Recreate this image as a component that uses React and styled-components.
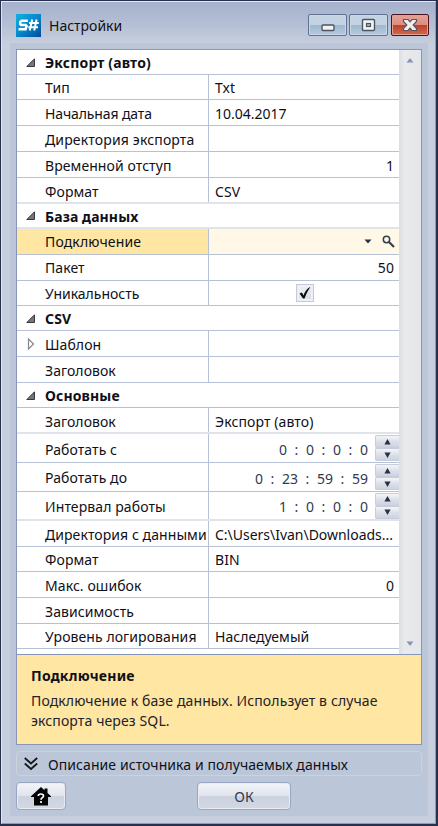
import React from 'react';
import styled, { createGlobalStyle, css } from 'styled-components';

const Global = createGlobalStyle`
  * { box-sizing: border-box; }
  html, body { margin: 0; padding: 0; overflow: hidden; }
  body { font-family: "Noto Sans", "Open Sans", sans-serif; font-size: 14px; color: #101018; }
`;

const Window = styled.div`
  width: 438px;
  height: 826px;
  padding: 1px 2px 2px 1px;
  background: #27304c;
`;
const Frame = styled.div`
  height: 823px;
  display: flex;
  flex-direction: column;
  border: 1px solid #8c9bba;
  border-top-color: #e4e8f4;
  border-left-color: #dfe4f0;
  background: linear-gradient(#a6b1cd 0, #b3bdd3 20px, #c7cfde 42px, #c7cfde 100%);
`;
const TitleBar = styled.header`
  height: 41px;
  flex: none;
  display: flex;
  align-items: flex-start;
  padding: 12px 6px 0 14px;
`;
const Title = styled.h1`
  flex: 1;
  margin: 2px 0 0 8px;
  font-size: 14px;
  font-weight: 400;
  line-height: 20px;
`;
const Controls = styled.div`
  display: flex;
  gap: 2px;
`;
const Control = styled.button`
  display: flex;
  align-items: center;
  justify-content: center;
  width: 39px;
  height: 22px;
  padding: 0;
  border: 1px solid #5f7291;
  border-radius: 2px;
  background: linear-gradient(#c3d3e3 0 50%, #9fb8ce 50%, #b4cbdd);
  box-shadow: inset 0 0 0 1px #c9d8e6;
  ${(p) => p.$close && css`
    width: 38px;
    margin-left: 1px;
    border-color: #4c1220;
    background: linear-gradient(#e5a295 0, #db8d7f 50%, #bd4127 50%, #cf6a4e);
    box-shadow: inset 0 0 0 1px #e3a195;
  `}
`;
const Body = styled.main`
  flex: none;
  width: 418px;
  height: 773px;
  margin: 0 8px;
  padding: 6px 6px 0;
  background: #bbc7d9;
`;
const Panel = styled.section`
  height: 606px;
  display: flex;
  border: 1px solid #8796b4;
  background: #fff;
`;
const Grid = styled.div`
  width: 382px;
  flex: none;
`;
const line = '#b6c1d5';
const rowBorder = css`
  height: ${(p) => p.$h}px;
  display: flex;
  border-bottom: ${(p) => (p.$soft ? '2px solid #dfe3ea' : `1px solid ${line}`)};
`;
const GroupRow = styled.div`
  ${rowBorder}
  align-items: center;
  font-weight: 700;
`;
const Row = styled.div`
  ${rowBorder}
`;
const Gutter = styled.span`
  width: 28px;
  flex: none;
  display: flex;
  align-items: center;
  padding-left: ${(p) => (p.$nested ? 10 : 9)}px;
`;
const Name = styled.div`
  width: 192px;
  flex: none;
  display: flex;
  align-items: center;
  border-right: 1px solid ${line};
  background: ${(p) => (p.$on ? '#ffe6a2' : '#fff')};
`;
const Label = styled.span`
  white-space: pre;
  line-height: 20px;
  padding-top: ${(p) => p.$drop ?? 2}px;
  letter-spacing: ${(p) => p.$ls ?? 0.08}px;
`;
const Value = styled.div`
  flex: 1;
  min-width: 0;
  display: flex;
  align-items: center;
  justify-content: ${(p) => p.$align || 'flex-start'};
  padding: 0 ${(p) => (p.$on ? 4 : 5)}px 0 6px;
  background: ${(p) => (p.$on ? '#fff8e6' : '#fff')};
`;
const Editor = styled.div`
  display: flex;
  align-items: center;
  gap: 10px;
`;
const CheckBox = styled.span`
  width: 18px;
  height: 18px;
  display: flex;
  align-items: center;
  justify-content: center;
  border: 1px solid #c3c9da;
  background: linear-gradient(135deg, #f4f5f9, #d3d8e5);
  box-shadow: inset 0 0 0 2px #eef0f5;
`;
const Time = styled.div`
  display: flex;
  align-items: center;
  color: #303a50;
  margin-right: 7px;
  padding-top: 3px;
`;
const Digits = styled.span`
  line-height: 20px;
`;
const Colon = styled.span`
  width: 19px;
  text-align: center;
  line-height: 20px;
`;
const Spinner = styled.div`
  width: 24px;
  height: 26px;
  display: grid;
  grid-template-rows: 13px 13px;
  margin-right: -5px;
`;
const SpinButton = styled.button`
  display: flex;
  align-items: center;
  justify-content: center;
  padding: 0;
  border: 1px solid #c7cddb;
  border-right: 0;
  border-radius: 2px 0 0 2px;
  background: linear-gradient(#f4f5f8, #dde0e9 50%, #cdd3e0);
`;
const ScrollBar = styled.div`
  flex: 1;
  display: flex;
  flex-direction: column;
  justify-content: space-between;
  align-items: center;
  padding: 8px 0 8px;
  background: linear-gradient(90deg, #dcdee2, #e9eaec 25%, #e5e6e9);
`;
const Description = styled.section`
  height: 90px;
  padding: 11px 14px;
  border: 1px solid #8796b4;
  border-top: 0;
  background: #ffe6a2;
  line-height: 20px;
`;
const DescTitle = styled.div`
  font-weight: 700;
  height: 25px;
  letter-spacing: 0.24px;
`;
const DescLine = styled.div`
  white-space: pre;
  letter-spacing: 0.12px;
  color: #22222a;
`;
const Expander = styled.div`
  height: 25px;
  margin-top: 6px;
  padding-left: 7px;
  display: flex;
  align-items: center;
  gap: 10px;
  border: 1px solid #cdd1d8;
  border-radius: 4px;
`;
const Footer = styled.footer`
  display: grid;
  grid-template-columns: 50px 94px;
  column-gap: 131px;
  margin-top: 6px;
`;
const Button = styled.button`
  height: 28px;
  display: flex;
  align-items: center;
  justify-content: center;
  padding: 0;
  border: 1px solid #9aa7c3;
  border-radius: 4px;
  background: linear-gradient(#f3f5f9, #dfe3eb 50%, #ccd2df 52%, #d3d8e4);
  box-shadow: inset 0 0 0 1px #e8ebf2;
  font: 14px "Noto Sans", sans-serif;
  color: #303a50;
`;

const Logo = () => (
  <svg width="25" height="23" viewBox="0 0 25 23">
    <defs>
      <linearGradient id="lg" x1="0" y1="0" x2="1" y2="1">
        <stop offset="0" stopColor="#12b0e6" />
        <stop offset="0.5" stopColor="#0687cc" />
        <stop offset="1" stopColor="#024a94" />
      </linearGradient>
    </defs>
    <rect width="25" height="23" fill="url(#lg)" />
    <g fill="none" stroke="#fff">
      <path d="M11.8 6.8H5.6L4.2 8V10L5.2 11H9.6L10.6 12L9.6 15.2H2.5" strokeWidth="2.5" />
      <path d="M16.2 5.5L13.8 16.5M20.6 5.5L18.2 16.5M13 9H22.8M12.3 13.2H22" strokeWidth="2" />
    </g>
  </svg>
);
const Minimize = () => (
  <svg width="14" height="14" viewBox="0 0 14 14">
    <rect x="1" y="7" width="12" height="5.5" rx="1" fill="#f2f2f0" stroke="#4c5564" strokeWidth="1.4" />
  </svg>
);
const Maximize = () => (
  <svg width="15" height="14" viewBox="0 0 15 14">
    <rect x="1.5" y="1.5" width="12" height="11" rx="1" fill="#f4f4f2" stroke="#4c5564" strokeWidth="1.4" />
    <rect x="5.5" y="5.5" width="4" height="3" fill="#9db5d0" stroke="#4c5564" strokeWidth="1.2" />
  </svg>
);
const Close = () => (
  <svg width="16" height="14" viewBox="0 0 16 14">
    <path d="M1.5 1.5H6L8 3.8L10 1.5H14.5V3.5L11.2 7L14.5 10.5V12.5H10L8 10.2L6 12.5H1.5V10.5L4.8 7L1.5 3.5Z" fill="#f1efef" stroke="#5b5660" strokeWidth="1.2" />
  </svg>
);
const OpenMark = () => (
  <svg width="9" height="9" viewBox="0 0 9 9">
    <path d="M8.5 .8V8.5H.8Z" fill="#73767b" stroke="#36383d" />
  </svg>
);
const ClosedMark = () => (
  <svg width="8" height="12" viewBox="0 0 8 12">
    <path d="M1.5 1L6.5 6L1.5 11Z" fill="#fff" stroke="#85878b" strokeWidth="1.2" />
  </svg>
);
const Search = () => (
  <svg width="13" height="13" viewBox="0 0 13 13" fill="none" stroke="#333d4e">
    <circle cx="4.5" cy="4.5" r="3.2" strokeWidth="1.5" />
    <path d="M7 7L12 12" strokeWidth="2.1" />
  </svg>
);
const Caret = () => (
  <svg width="8" height="5" viewBox="0 0 8 5"><path d="M.5 .5H7.5L4 4.5Z" fill="#26324a" /></svg>
);
const Tick = () => (
  <svg width="14" height="14" viewBox="0 0 14 14">
    <path d="M1.5 7.5L4 6.6L5.5 9.4C7 5.5 9 2.5 12.5 .8C10 4.5 8.2 8 6.6 12.6H5Z" fill="#0b0b0d" />
  </svg>
);
const Arrow = ({ down, color = '#26324a', w = 7, h = 6 }) => (
  <svg width={w} height={h} viewBox="0 0 8 6" preserveAspectRatio="none">
    <path d={down ? 'M.5 .5H7.5L4 6Z' : 'M.5 5.5H7.5L4 0Z'} fill={color} />
  </svg>
);
const Chevrons = () => (
  <svg width="14" height="14" viewBox="0 0 14 14" fill="none" stroke="#15171c" strokeWidth="1.8">
    <path d="M.8 1L7 6.5L13.2 1M.8 6.5L7 12L13.2 6.5" />
  </svg>
);
const HomeHelp = () => (
  <svg width="20" height="19" viewBox="0 0 20 19">
    <path d="M10 0L13.5 3.2V1.5H16.5V6L20 9.2V10H17V18.5H3V10H0V9.2Z" fill="#050506" />
    <path d="M7.3 9C7.3 6.3 12.5 6.3 12.5 9C12.5 10.7 10 10.7 10 12.7M10 14V16" fill="none" stroke="#fff" strokeWidth="1.7" />
  </svg>
);

const TimeEditor = ({ parts }) => (
  <>
    <Time>
      {parts.map((n, i) => (
        <React.Fragment key={i}>
          {i > 0 && <Colon>:</Colon>}
          <Digits>{n}</Digits>
        </React.Fragment>
      ))}
    </Time>
    <Spinner>
      <SpinButton><Arrow /></SpinButton>
      <SpinButton><Arrow down /></SpinButton>
    </Spinner>
  </>
);

const rows = [
  { group: 'Экспорт (авто)', h: 25, ls: 0.15 },
  { name: 'Тип', value: 'Txt', h: 25 },
  { name: 'Начальная дата', value: '10.04.2017', h: 26, ls: -0.12, vls: 0 },
  { name: 'Директория экспорта', h: 26, ls: 0.15 },
  { name: 'Временной отступ', value: '1', align: 'flex-end', h: 26 },
  { name: 'Формат', value: 'CSV', h: 26, soft: true, drop: 4 },
  { group: 'База данных', h: 25, soft: true, drop: 3, ls: 0.1 },
  { name: 'Подключение', kind: 'lookup', h: 26, ls: 0.14, drop: 1 },
  { name: 'Пакет', value: '50', align: 'flex-end', h: 26, drop: 1 },
  { name: 'Уникальность', kind: 'check', h: 25, ls: -0.02 },
  { group: 'CSV', h: 25, ls: 0.15 },
  { name: 'Шаблон', nested: true, h: 26 },
  { name: 'Заголовок', h: 26, ls: 0.05 },
  { group: 'Основные', h: 25, ls: 0.12 },
  { name: 'Заголовок', value: 'Экспорт (авто)', h: 26, soft: true, ls: 0.05, vls: 0.1, drop: 4 },
  { name: 'Работать с', time: ['0', '0', '0', '0'], h: 29, drop: 3 },
  { name: 'Работать до', time: ['0', '23', '59', '59'], h: 29 },
  { name: 'Интервал работы', time: ['1', '0', '0', '0'], h: 29, soft: true, ls: 0.1, drop: 3 },
  { name: 'Директория с данными', value: 'C:\\Users\\Ivan\\Downloads...', h: 26, ls: 0.07, vls: -0.02 },
  { name: 'Формат', value: 'BIN', h: 25 },
  { name: 'Макс. ошибок', value: '0', align: 'flex-end', h: 26 },
  { name: 'Зависимость', h: 26 },
  { name: 'Уровень логирования', value: 'Наследуемый', h: 25, vls: 0.04 },
];

const Property = ({ r }) => {
  if (r.group) {
    return (
      <GroupRow $h={r.h} $soft={r.soft}>
        <Gutter><OpenMark /></Gutter>
        <Label $ls={r.ls} $drop={r.drop}>{r.group}</Label>
      </GroupRow>
    );
  }
  const on = r.kind === 'lookup';
  const align = r.kind === 'check' ? 'center' : on || r.time ? 'flex-end' : r.align;
  return (
    <Row $h={r.h} $soft={r.soft}>
      <Name $on={on}>
        <Gutter $nested={r.nested}>{r.nested && <ClosedMark />}</Gutter>
        <Label $ls={r.ls} $drop={r.drop}>{r.name}</Label>
      </Name>
      <Value $on={on} $align={align}>
        {on && <Editor><Caret /><Search /></Editor>}
        {r.kind === 'check' && <CheckBox><Tick /></CheckBox>}
        {r.time && <TimeEditor parts={r.time} />}
        {r.value && <Label $ls={r.vls} $drop={r.drop}>{r.value}</Label>}
      </Value>
    </Row>
  );
};

export default function App() {
  return (
    <>
      <Global />
      <Window>
        <Frame>
          <TitleBar>
            <Logo />
            <Title>Настройки</Title>
            <Controls>
              <Control><Minimize /></Control>
              <Control><Maximize /></Control>
              <Control $close><Close /></Control>
            </Controls>
          </TitleBar>
          <Body>
            <Panel>
              <Grid>
                {rows.map((r, i) => <Property key={i} r={r} />)}
              </Grid>
              <ScrollBar>
                <Arrow color="#8795b4" w={8} h={5} />
                <Arrow down color="#8795b4" w={8} h={5} />
              </ScrollBar>
            </Panel>
            <Description>
              <DescTitle>Подключение</DescTitle>
              <DescLine>Подключение к базе данных. Использует в случае</DescLine>
              <DescLine>экспорта через SQL.</DescLine>
            </Description>
            <Expander><Chevrons /><Label>Описание источника и получаемых данных</Label></Expander>
            <Footer>
              <Button><HomeHelp /></Button>
              <Button>ОК</Button>
            </Footer>
          </Body>
        </Frame>
      </Window>
    </>
  );
}
